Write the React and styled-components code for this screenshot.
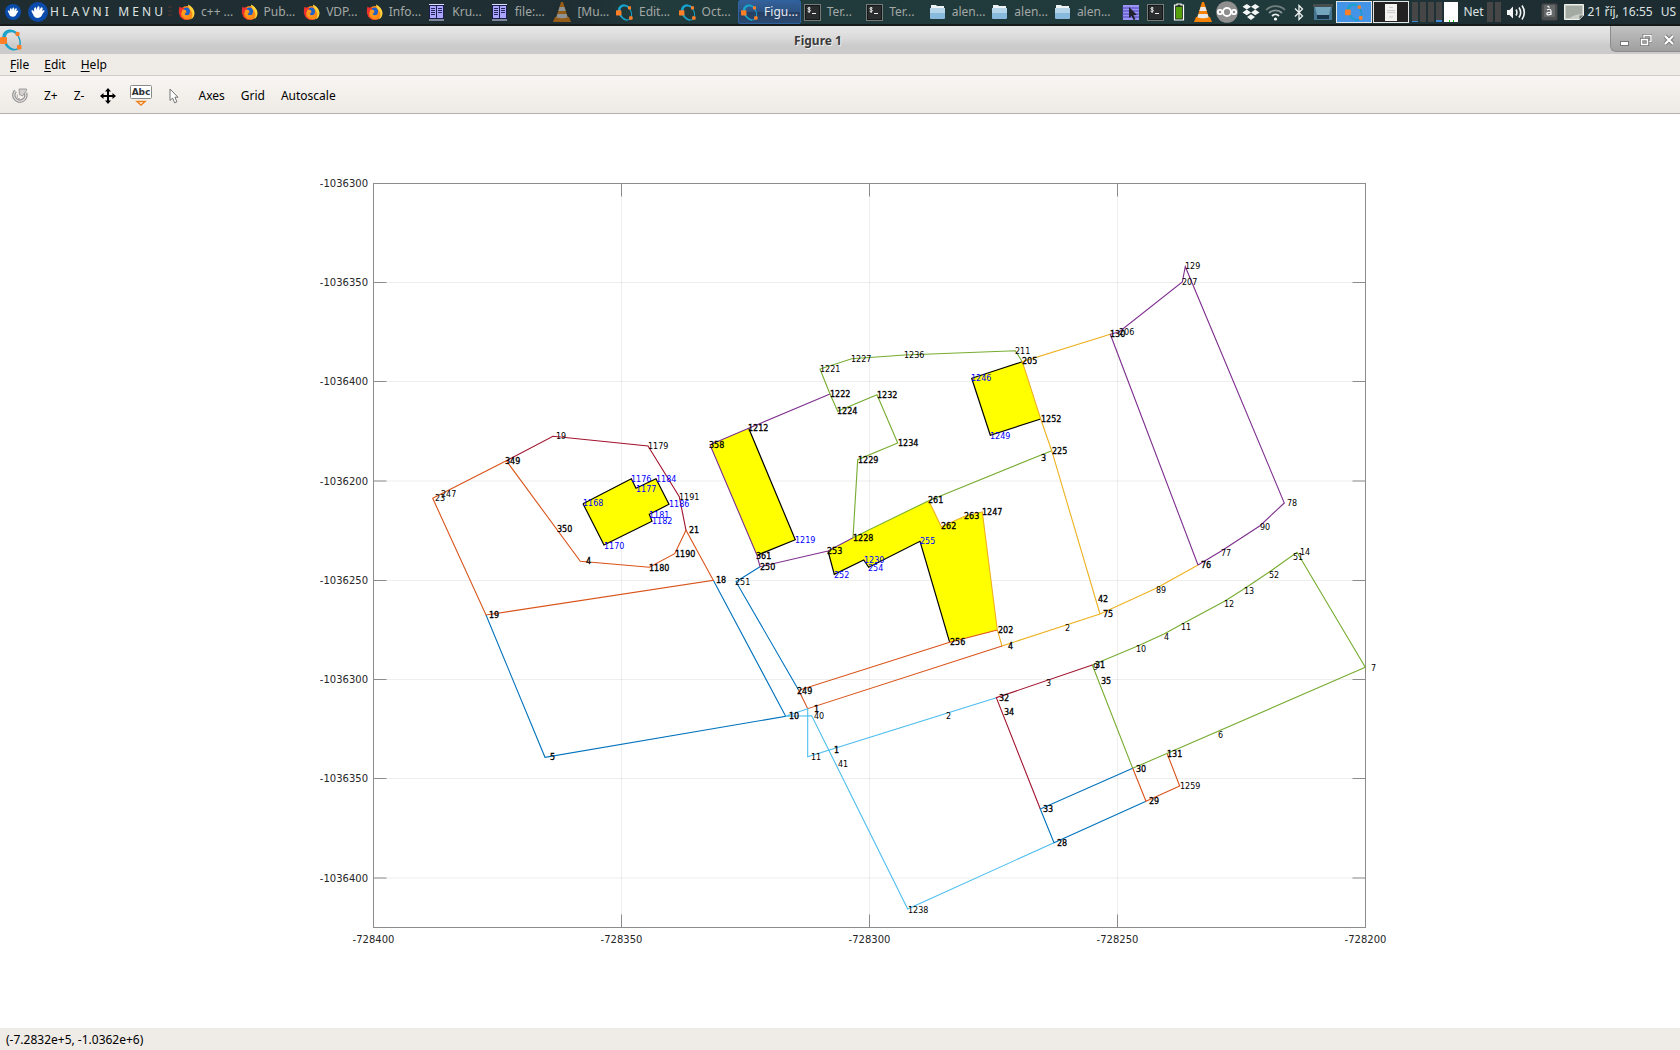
import React from "react";
import styled, { createGlobalStyle, css } from "styled-components";

const ui = '"Noto Sans", "Open Sans", sans-serif';

const GlobalStyle = createGlobalStyle`
  html, body { margin: 0; padding: 0; }
  *, *::before, *::after { box-sizing: border-box; }
  body { font-family: ${ui}; font-size: 12px; line-height: 16px; color: #000; }
  button { font: inherit; color: inherit; background: none; border: 0; margin: 0; padding: 0; }
  svg { display: block; flex: none; }
`;

const Desktop = styled.div`
  display: flex;
  flex-direction: column;
  min-height: 100vh;
  background: #fff;
`;

/* ---------- desktop panel ---------- */

const Panel = styled.nav`
  display: flex;
  align-items: center;
  height: 26px;
  padding-right: 4px;
  color: #dfe3e3;
  background: linear-gradient(100deg, #1f2d31 0%, #1f2f33 35%, #213a3c 38%, #203a3b 78%, #1e2f33 88%, #1c2b30 100%);
  border-bottom: 2px solid #161a1a;
`;

const Launcher = styled.button`
  display: flex;
  align-items: center;
  height: 24px;
  padding-left: ${(p) => (p.$first ? "5px" : "7px")};
  gap: 2px;
  white-space: pre;
`;

const Grip = styled.span`
  width: 4px;
  height: 12px;
  margin: 0 3px 0 5px;
  background: repeating-linear-gradient(#3a3030 0 2px, transparent 2px 4px);
`;

const Tasks = styled.div`
  display: flex;
  flex: 1;
  min-width: 0;
  height: 24px;
  margin-right: 6px;
`;

const Task = styled.button`
  display: flex;
  align-items: center;
  gap: 6px;
  flex: 1 1 0;
  min-width: 0;
  padding: 0 2px;
  white-space: nowrap;
  overflow: hidden;
  color: #a3a8a6;
  border: 1px solid transparent;
  border-radius: 2px;
  ${(p) =>
    p.$active &&
    css`
      color: #e8ecf2;
      background: linear-gradient(#33619a 0%, #2c5282 48%, #263f63 52%, #2b4a72 100%);
      border-color: #2f62a0;
    `}
`;

const Tray = styled.div`
  display: flex;
  align-items: center;
  height: 24px;
`;

const TrayButton = styled.button`
  display: flex;
  align-items: center;
  justify-content: center;
  width: 24px;
  height: 24px;
`;

const TrayGap = styled.span`
  width: 10px;
`;

const Pager = styled.div`
  display: flex;
  gap: 1px;
  padding: 0 3px 0 1px;
`;

const PagerCell = styled.button`
  display: flex;
  align-items: center;
  justify-content: center;
  width: 36px;
  height: 22px;
  border: 1px solid #e4e4e4;
  background: ${(p) => (p.$active ? "#4393e6" : "#222")};
`;

const Meters = styled.div`
  display: flex;
  gap: 2px;
  margin-right: ${(p) => (p.$tight ? "3px" : "5px")};
`;

const Meter = styled.span`
  width: ${(p) => (p.$graph ? "14px" : "6px")};
  height: 20px;
  background: ${(p) =>
    p.$graph
      ? "linear-gradient(90deg, transparent 5px, #1ed11e 5px 6px, transparent 6px 9px, #1ed11e 9px 10px, transparent 10px) bottom / 100% 2px no-repeat #fff"
      : "#464646"};
  border-bottom: ${(p) => (p.$load ? `${p.$load}px solid #3e86d8` : "0")};
`;

const Label = styled.span`
  margin-left: ${(p) => (p.$tight ? "0" : "2px")};
  margin-right: ${(p) => (p.$tight ? "3px" : "8px")};
  white-space: nowrap;
`;

/* ---------- window chrome ---------- */

const TitleBar = styled.header`
  display: flex;
  align-items: center;
  height: 28px;
  background: linear-gradient(#e8e8e8 0%, #d9d9d9 45%, #cbcbcb 70%, #cbcbcb 100%);
`;

const Title = styled.h1`
  flex: 1;
  margin: 0;
  padding: 2px 0 0 4px;
  font-size: 12px;
  line-height: 16px;
  font-weight: 700;
  text-align: center;
  color: #3b3b3b;
  text-shadow: 1px 1px 0 #f2f2f2;
`;

const WindowButtons = styled.div`
  display: flex;
  align-self: flex-start;
  align-items: center;
  justify-content: space-between;
  width: 70px;
  height: 26px;
  padding: 2px 4px 0 8px;
  background: linear-gradient(#c2c2c2, #9f9f9f);
  border-left: 1px solid #8c8c8c;
  border-bottom: 1px solid #8c8c8c;
  border-bottom-left-radius: 6px;
`;

const WindowButton = styled.button`
  display: flex;
  padding: 0 1px;
`;

const MenuBar = styled.nav`
  display: flex;
  align-items: center;
  gap: 15px;
  height: 22px;
  padding: 0 10px;
  background: #efebe7;
  border-bottom: 1px solid #d0ccc8;
`;

const MenuItem = styled.button`
  line-height: 20px;
  &::first-letter {
    text-decoration: underline;
    text-underline-offset: 2px;
  }
`;

const ToolBar = styled.div`
  display: flex;
  align-items: center;
  height: 38px;
  padding: 2px 4px 0;
  background: linear-gradient(#f8f5f2, #eeebe6);
  border-bottom: 1px solid #b5b1ac;
`;

const Tool = styled.button`
  display: flex;
  align-items: center;
  height: 32px;
  padding: 0 ${(p) => (p.$wide ? "6px" : "8px")};
`;

const Canvas = styled.main`
  display: flex;
  flex: 1;
  min-height: 0;
  background: #fff;
`;

const Plot = styled.svg`
  width: 100%;
  height: auto;
  flex: 1;
  font-family: "DejaVu Sans", sans-serif;
`;

const TickText = styled.text`
  font-size: 10px;
  fill: #262626;
  text-anchor: ${(p) => p.$anchor};
`;

const PointText = styled.text`
  font-size: 8px;
  fill: ${(p) => (p.$kind === 2 ? "#0000ff" : "#000")};
  stroke: ${(p) => (p.$kind === 1 ? "#000" : "none")};
  stroke-width: 0.3px;
`;

const StatusBar = styled.footer`
  display: flex;
  align-items: center;
  height: 22px;
  padding: 2px 6px 0;
  background: #efebe7;
`;

/* ---------- icons ---------- */

const Mouse = ({ s }) => (
  <svg width={s} height={s} viewBox="0 0 20 20" aria-hidden="true">
    <circle cx="10" cy="10" r="10" fill="#0a4bab" />
    <path d="M3.500 8.500c1-.9 2 0 2.700 1.200C5.800 7.500 6 5.500 7.200 5.300c1.100 0 1.200 1.600 1.500 3C9 6.500 9.300 4.300 10.500 4.300s1.100 2 .9 4c.8-1.600 1.700-3.400 2.800-2.900 1 .5.300 2.300-.2 3.800 1-.8 2-1.300 2.500-.6.500.8-1.300 2-2 3.500-.8 2-2 3.800-4.700 3.900-2.500 0-4-1.400-4.600-3.500-.5-1.500-2.200-3-1.700-4z" fill="#fff" />
  </svg>
);

const Firefox = () => (
  <svg width="17" height="17" viewBox="0 0 17 17" aria-hidden="true">
    <circle cx="9" cy="9" r="7" fill="#ff8a16" />
    <path d="M10 .5c3.500 1.500 6.500 5 6.500 8.500a7.500 7.500 0 0 1-4 6.600c2-2 2.500-5 1.300-7.600C13 6 10 4 10 .5z" fill="#ffd23c" />
    <path d="M1.500 2.500c.6.800 1.200 1 2 1.200L5.500 3l.8 2.500L3 9l.5 3.500 3.500 3 4.500-.2A7.600 7.600 0 0 1 1 9.500C.6 7 1 4.500 1.500 2.500z" fill="#f0302c" />
    <path d="M6 4.200c1.500-1.200 4-1 5.200.6 1.300 1.600 1.200 4.700-.5 6-1.500 1-4 .7-4.500-1.200 1 .2 2-.2 2.200-1L6.200 7.200z" fill="#1f62c9" />
    <path d="M4.500 5.500l3 .6 1.200 1.500-2.200.8.200 2c1 1.500 3 1.400 4.500.6-1 2-4.200 2.600-6 .8-1.600-1.500-1.700-4.500-.7-6.300z" fill="#ff9d1c" />
  </svg>
);

const Document = ({ pointer }) => (
  <svg width="18" height="17" viewBox="0 0 18 17" aria-hidden="true">
    {pointer ? (
      <>
        <rect x="1" y="1" width="16" height="15" fill="#9b93f5" />
        <path d="M0 4h17M0 7h17M0 10h17M0 13h17" stroke="#4a45b5" />
        <path d="M7 3l8 8-3.500.2 2 4-2 .8-1.800-4L7 14z" fill="#21242e" />
      </>
    ) : (
      <>
        <rect x="1" y="1" width="15" height="14" fill="#1d1d4a" />
        <path d="M1 .5h15M1 16h15" stroke="#dcdcff" />
        <path d="M2 2h6v12H2zM9 2h6v12H9z" fill="#aaa5ff" />
        <path d="M3 4.500h4M3 6.500h4M3 8.500h4M3 10.500h4M10 4.500h4M10 6.500h4M10 8.500h4" stroke="#25255c" />
      </>
    )}
  </svg>
);

const Cone = ({ dim }) => (
  <svg width="18" height="22" viewBox="0 0 18 22" opacity={dim ? 0.55 : 1} aria-hidden="true">
    <path d="M2 16h14l2 5H0z" fill="#f58200" />
    <path d="M8 1h2l5 16c-3 2-9 2-12 0z" fill="#f58200" />
    <path d="M6.600 6h4.800l1.300 4H5.400zM4.400 13h9.200l1 3.200c-3 1.500-8 1.500-11.200 0z" fill="#e8e8e8" />
  </svg>
);

const Octave = ({ w = 17 }) => (
  <svg width={w} height={w} viewBox="0 0 22 22" aria-hidden="true">
    <path d="M20 12c.8 5.500-2 9.500-6.500 8.500C8 19.400 3 13.500 3.500 7.500 4 2.500 8.500 0 13 2.500c3.800 2 6.400 5.800 7 9.500z" fill="none" stroke="#149ac4" strokeWidth="1.400" />
    <path d="M17 3.800C10 -1.500 2.500 2 3 9c.5 6 5.500 11.500 11 12C8.500 19 5.500 14 5.300 9 5.200 3.500 10 .8 17 3.800z" fill="#1aa3cc" stroke="#1aa3cc" strokeWidth="1.200" />
    <rect x="0" y="8" width="7" height="7" rx="1" fill="#ff7f27" />
    <rect x="15.500" y="3" width="4" height="4" rx="1" fill="#ff7f27" />
    <rect x="17" y="16" width="4.500" height="4.500" rx="1" fill="#ff7f27" />
  </svg>
);

const Terminal = () => (
  <svg width="17" height="17" viewBox="0 0 17 17" aria-hidden="true">
    <rect x=".5" y=".5" width="16" height="16" fill="#15181a" stroke="#777b78" />
    <rect x="2" y="2" width="13" height="13" fill="#292d2e" />
    <path d="M6.500 4.200c-1-.9-2.800-.5-2.600.6.200 1 2.500.6 2.500 1.900 0 1-1.800 1.300-2.800.4M5.100 3v6M8 9.500h4" fill="none" stroke="#f0f0f0" />
  </svg>
);

const Folder = () => (
  <svg width="17" height="16" viewBox="0 0 17 16" aria-hidden="true">
    <path d="M2 1h5l1 1h7v4H2z" fill="#eef3f6" />
    <rect x="1" y="4" width="15" height="11" rx="1" fill="#86b9dc" />
    <path d="M1 4h15v5H1z" fill="#b4d4ea" />
  </svg>
);

const Battery = () => (
  <svg width="12" height="18" viewBox="0 0 12 18" aria-hidden="true">
    <path d="M4 2V1h4v1h2.500v15h-9V2z" fill="#25351f" stroke="#fff" strokeWidth="1.200" />
    <rect x="3" y="4" width="6" height="11.500" fill="#56a00b" />
  </svg>
);

const Cloud = () => (
  <svg width="22" height="22" viewBox="0 0 22 22" aria-hidden="true">
    <circle cx="11" cy="11" r="10.800" fill="#8f8f8f" />
    <g fill="none" stroke="#fff" strokeWidth="1.800">
      <circle cx="4" cy="11" r="2.200" />
      <circle cx="11" cy="11" r="4" />
      <circle cx="18" cy="11" r="2.200" />
    </g>
  </svg>
);

const Dropbox = () => (
  <svg width="18" height="17" viewBox="0 0 18 17" fill="#f4f6f6" aria-hidden="true">
    <path d="M4.800 0L9 2.800 4.800 5.600.5 2.800zM13.200 0l4.300 2.800-4.300 2.800L9 2.800zM.5 8.400l4.300-2.800L9 8.400l-4.200 2.800zM13.200 5.600l4.300 2.800-4.300 2.800L9 8.400zM9 10.200l4 2.700L9 16l-4-3.100z" />
  </svg>
);

const Wifi = () => (
  <svg width="21" height="17" viewBox="0 0 21 17" fill="none" aria-hidden="true">
    <path d="M1 6C6 .8 15 .8 20 6" stroke="#71807f" strokeWidth="1.800" />
    <path d="M4 9c3.500-3.600 9.500-3.600 13 0" stroke="#8f9a9a" strokeWidth="1.800" />
    <path d="M7 12c2-2 5-2 7 0" stroke="#e8ebeb" strokeWidth="1.800" />
    <circle cx="10.500" cy="15" r="1.600" fill="#fff" />
  </svg>
);

const Bluetooth = () => (
  <svg width="10" height="17" viewBox="0 0 10 17" fill="none" stroke="#eef1f1" strokeWidth="1.300" aria-hidden="true">
    <path d="M1 4.500l7.500 7.500L5 15.500v-14L8.500 5 1 12.500" />
  </svg>
);

const Drive = () => (
  <svg width="20" height="18" viewBox="0 0 20 18" aria-hidden="true">
    <rect x="0" y="1" width="20" height="3" fill="#474e50" />
    <rect x="1" y="4" width="18" height="13" fill="#477692" />
    <path d="M2 4h16l-2 8H4z" fill="#73a6bd" />
    <path d="M4 12h12v4H4z" fill="#193649" />
  </svg>
);

const Page = () => (
  <svg width="12" height="17" viewBox="0 0 12 17" aria-hidden="true">
    <rect width="12" height="17" fill="#f2f2f0" />
    <path d="M4 3.500h4M2 6.500h8M2 8.500h8M4 13h4" stroke="#bdbdbd" strokeWidth=".7" />
  </svg>
);

const Speaker = () => (
  <svg width="20" height="17" viewBox="0 0 20 17" fill="none" stroke="#f3f5f5" strokeWidth="1.600" aria-hidden="true">
    <path d="M1 6h2.500L7 2.500v12L3.500 11H1z" fill="#f3f5f5" stroke="none" />
    <path d="M10 5.500c1.200 2 1.200 4 0 6M13 3.500c2 3 2 7 0 10M16 1.500c3 4.500 3 9.500 0 14" />
  </svg>
);

const Keyboard = () => (
  <svg width="17" height="18" viewBox="0 0 17 18" aria-hidden="true">
    <rect x=".5" y=".5" width="16" height="17" rx="2" fill="#4b4f50" stroke="#34383a" />
    <rect x="3" y="2" width="11" height="12" rx="1" fill="#65696a" />
    <path d="M6.500 3l2 1.500M6 7c1.500-1.200 4-1 4 .8V12M10 9.300c-3-.2-4.300.5-4.200 1.600.2 1.500 3.200 1.300 4.200-.2" fill="none" stroke="#fff" strokeWidth="1.200" />
  </svg>
);

const Note = () => (
  <svg width="20" height="16" viewBox="0 0 20 16" aria-hidden="true">
    <path d="M.5.5h19v11l-4 4H.5z" fill="#c9cdc7" stroke="#eef0ec" />
    <path d="M2 2h16v8c-6 .5-10 2-12 4H2z" fill="#a3aaa2" />
    <path d="M19.500 11.500l-4 4v-4z" fill="#747b74" />
  </svg>
);

const Refresh = () => (
  <svg width="16" height="16" viewBox="0 0 16 16" fill="none" aria-hidden="true">
    <path d="M3.500 3A6 6 0 1 0 13.500 5" stroke="#8c8c8c" strokeWidth="3.400" />
    <path d="M3.500 3A6 6 0 1 0 13.500 5" stroke="#dedcda" strokeWidth="1.400" />
    <path d="M7 1h7.500v1.500L10.500 8 7.500 6.500z" fill="#d3d1cf" stroke="#8c8c8c" strokeWidth=".8" />
    <path d="M5.500 6.500c-1 2 0 4.500 2.500 4.500" stroke="#a5a5a5" />
  </svg>
);

const Move = () => (
  <svg width="16" height="16" viewBox="0 0 16 16" aria-hidden="true">
    <path d="M8 0l3 3.500H9V7h3.500V5L16 8l-3.500 3V9H9v3.500h2L8 16l-3-3.500h2V9H3.500v2L0 8l3.500-3v2H7V3.500H5z" />
  </svg>
);

const AbcIcon = () => (
  <svg width="22" height="22" viewBox="0 0 22 22" aria-hidden="true">
    <rect x=".5" y=".5" width="21" height="13" rx="1" fill="#fff" stroke="#8a8a86" />
    <text x="11" y="10" textAnchor="middle" fontFamily="DejaVu Sans, sans-serif" fontWeight="700" fontSize="9" fill="#2e3436">Abc</text>
    <path d="M7 16.500h8l-4 3.500z" fill="#fff" stroke="#ef7f1a" strokeWidth="1.400" />
  </svg>
);

const Pointer = () => (
  <svg width="16" height="16" viewBox="0 0 16 16" aria-hidden="true">
    <path d="M4 1v11.500l2.600-2.400 2 4.700 2.300-1-2-4.600H12z" fill="#fff" stroke="#737373" />
  </svg>
);

const Minimize = () => (
  <svg width="9" height="12" viewBox="0 0 9 12" aria-hidden="true">
    <rect x=".5" y="7.500" width="8" height="4" fill="#fff" stroke="#777" />
  </svg>
);

const Restore = () => (
  <svg width="12" height="12" viewBox="0 0 12 12" fill="none" aria-hidden="true">
    <path d="M4 4V1.500h7v6H8.500" stroke="#777" strokeWidth="3" />
    <path d="M4 4V1.500h7v6H8.500" stroke="#fff" strokeWidth="1.400" />
    <rect x="1" y="5" width="7" height="6" fill="#999" stroke="#777" strokeWidth="2.400" />
    <rect x="1.500" y="5.500" width="6" height="5" stroke="#fff" strokeWidth="1.400" />
  </svg>
);

const Close = () => (
  <svg width="12" height="12" viewBox="0 0 12 12" fill="none" aria-hidden="true">
    <path d="M2 2l8 8M10 2l-8 8" stroke="#777" strokeWidth="4" />
    <path d="M2 2l8 8M10 2l-8 8" stroke="#fff" strokeWidth="2.200" />
  </svg>
);

/* ---------- data ---------- */

const tasks = [
  [<Firefox />, "c++ ..."],
  [<Firefox />, "Pub..."],
  [<Firefox />, "VDP..."],
  [<Firefox />, "Info..."],
  [<Document />, "Kru..."],
  [<Document />, "file:..."],
  [<Cone dim />, "[Mu..."],
  [<Octave />, "Edit..."],
  [<Octave />, "Oct..."],
  [<Octave />, "Figu...", true],
  [<Terminal />, "Ter..."],
  [<Terminal />, "Ter..."],
  [<Folder />, "alen..."],
  [<Folder />, "alen..."],
  [<Folder />, "alen..."],
];

const tray = [
  ["Clipboard", <Document pointer />],
  ["Terminal", <Terminal />],
  ["Battery", <Battery />],
  ["Player", <Cone />],
  ["Cloud", <Cloud />],
  ["Dropbox", <Dropbox />],
  ["Wireless", <Wifi />],
  ["Bluetooth", <Bluetooth />],
  ["Show desktop", <Drive />],
];

const X = { left: 373.5, right: 1365.5 };
const Y = { top: 183.5, bottom: 927.5 };
const xTicks = [
  [373.5, "-728400"],
  [621.5, "-728350"],
  [869.5, "-728300"],
  [1117.5, "-728250"],
  [1365.5, "-728200"],
];
const yTicks = [
  [183.5, "-1036300"],
  [282.5, "-1036350"],
  [381.5, "-1036400"],
  [481, "-1036200"],
  [580.5, "-1036250"],
  [679.5, "-1036300"],
  [778.5, "-1036350"],
  [878, "-1036400"],
];

const buildings = [
  "583,503.7 631.3,478.7 636,488.3 656,478.7 669,504.3 649.3,514.3 652,521.3 604,545",
  "710,444.7 748.7,428.3 795.3,539.7 757,555.3",
  "828,551 853,537.7 928.7,500.7 941.3,526.7 965.3,516 982.3,512 997.3,630 949.7,642.3 920,541.3 868.7,567.3 863.7,560 834.3,574.3",
  "1022.3,361.7 971.7,378.3 990.3,435.3 1040.7,419",
];

/* building walls that are not a parcel boundary */
const walls = [
  "583,503.7 631.3,478.7 636,488.3 656,478.7 669,504.3 649.3,514.3 652,521.3 604,545 583,503.7",
  "748.7,428.3 795.3,539.7 757,555.3",
  "828,551 834.3,574.3 863.7,560 868.7,567.3 920,541.3 949.7,642.3",
  "1022.3,361.7 971.7,378.3 990.3,435.3 1040.7,419",
];

const blue = "#0072bd";
const orange = "#d95319";
const yellow = "#edb120";
const purple = "#7e2f8e";
const green = "#77ac30";
const sky = "#4dbeee";
const maroon = "#a2142f";

const lines = [
  [blue, "486,615 545,757.3 785.7,716.3 713.3,580.3"],
  [blue, "760,566.7 736,581.7 798.7,690.3"],
  [orange, "506.3,460.7 432.7,498.3 486,615 713.3,580.3 686,530.3 674.7,553.7 649.3,567.3 580.3,561.3 506.3,460.7"],
  [maroon, "506.3,460.7 553,436.3 648,446 679.3,496.7 686,530.3"],
  [purple, "830,394 748.7,428.3 710,444.7 757,555.3 760,566.7 828,551 853,537.7"],
  [green, "830,394 820,369 851.7,358.7 904.7,355 1015.3,350.7 1022.3,361.7"],
  [green, "830,394 837.7,411.3 877,394.7 897.7,443 857.7,459.7 853,537.7 928.7,500.7 1051.7,450.7"],
  [yellow, "1110.3,334.3 1022.3,361.7 1040.7,419 1051.7,450.7 1100,614"],
  [yellow, "928.7,500.7 941.3,526.7 965.3,516 982.3,512 997.3,630 1002,646 1100,614 1156.7,588 1198,565"],
  [orange, "997.3,630 949.7,642.3 798.7,690.3 807.7,708.7 1002,646"],
  [purple, "1198,565 1110.3,334.3 1119.3,331.7 1182.3,282 1185.3,266.7 1284.3,503 1260,525.7 1221.7,550.7 1198,565"],
  [green, "1132.7,768.3 1092.3,665 1138.3,645.7 1164,634 1181.7,624.3 1225,601 1245,588.3 1269.3,572 1297,552.3 1365.3,667.3 1132.7,768.3"],
  [sky, "996.3,697.7 807.7,756.7 807.7,708.7 785.7,716.3 811.7,715.7 907.7,909 1054,842.7"],
  [maroon, "1092.3,665 996.3,697.7 1040.3,809"],
  [blue, "1132.7,768.3 1040.3,809 1054,842.7 1146,801.3"],
  [orange, "1132.7,768.3 1146,801.3 1179.7,786 1167.3,754"],
];

/* text, left, middle, kind: 0 plain, 1 shared point, 2 building corner */
const points = [
  ["19", 556, 436, 0], ["1179", 648, 446, 0], ["349", 505, 461, 1], ["247", 441, 494, 0],
  ["23", 435, 498, 0], ["350", 557, 529, 1], ["4", 586, 561, 1], ["1180", 649, 568, 1],
  ["1190", 675, 554, 1], ["21", 689, 530, 1], ["1191", 679, 497, 0], ["19", 489, 615, 1],
  ["18", 716, 580, 1], ["1168", 583, 503, 2], ["1176", 631, 479, 2], ["1177", 636, 489, 2],
  ["1184", 656, 479, 2], ["1186", 669, 504, 2], ["1181", 649, 515, 2], ["1182", 652, 521, 2],
  ["1170", 604, 546, 2], ["358", 709, 445, 1], ["1212", 748, 428, 1], ["361", 756, 556, 1],
  ["1219", 795, 540, 2], ["250", 760, 567, 1], ["251", 735, 582, 0], ["253", 827, 551, 1],
  ["1228", 853, 538, 1], ["261", 928, 500, 1], ["262", 941, 526, 1], ["263", 964, 516, 1],
  ["1247", 982, 512, 1], ["202", 998, 630, 1], ["256", 950, 642, 1], ["4", 1008, 646, 1],
  ["255", 920, 541, 2], ["254", 868, 568, 2], ["1230", 864, 560, 2], ["252", 834, 575, 2],
  ["1221", 820, 369, 0], ["1227", 851, 359, 0], ["1236", 904, 355, 0], ["211", 1015, 351, 0],
  ["205", 1022, 361, 1], ["1246", 971, 378, 2], ["1249", 990, 436, 2], ["1252", 1041, 419, 1],
  ["225", 1052, 451, 1], ["3", 1041, 458, 1], ["1222", 830, 394, 1], ["1224", 837, 411, 1],
  ["1232", 877, 395, 1], ["1234", 898, 443, 1], ["1229", 858, 460, 1], ["130", 1110, 334, 1],
  ["206", 1119, 332, 0], ["207", 1182, 282, 0], ["129", 1185, 266, 0], ["78", 1287, 503, 0],
  ["90", 1260, 527, 0], ["77", 1221, 553, 0], ["76", 1201, 565, 1], ["14", 1300, 552, 0],
  ["51", 1293, 557, 0], ["42", 1098, 599, 1], ["75", 1103, 614, 1], ["89", 1156, 590, 0],
  ["2", 1065, 628, 0], ["10", 1136, 649, 0], ["4", 1164, 637, 0], ["11", 1181, 627, 0],
  ["12", 1224, 604, 0], ["13", 1244, 591, 0], ["52", 1269, 575, 0], ["7", 1371, 668, 0],
  ["9", 1093, 667, 0], ["31", 1095, 665, 1], ["35", 1101, 681, 1], ["3", 1046, 683, 0],
  ["32", 999, 698, 1], ["34", 1004, 712, 1], ["2", 946, 716, 0], ["6", 1218, 735, 0],
  ["249", 797, 691, 1], ["1", 814, 709, 1], ["10", 789, 716, 1], ["40", 814, 716, 0],
  ["1", 834, 750, 1], ["11", 811, 757, 0], ["41", 838, 764, 0], ["1238", 908, 910, 0],
  ["28", 1057, 843, 1], ["33", 1043, 809, 1], ["30", 1136, 769, 1], ["131", 1167, 754, 1],
  ["1259", 1180, 786, 0], ["29", 1149, 801, 1], ["5", 550, 757, 1],
];

const Figure = () => (
  <Plot viewBox="0 114 1680 914" role="img" aria-label="Figure 1">
    <g stroke="#262626" strokeOpacity=".08">
      {xTicks.slice(1, -1).map(([x]) => <path key={x} d={`M${x} ${Y.top}V${Y.bottom}`} />)}
      {yTicks.slice(1).map(([y]) => <path key={y} d={`M${X.left} ${y}H${X.right}`} />)}
    </g>
    <g stroke="#8c8c8c" fill="none">
      <rect x={X.left} y={Y.top} width={X.right - X.left} height={Y.bottom - Y.top} />
      {xTicks.slice(1, -1).map(([x]) => (
        <path key={x} d={`M${x} ${Y.top}v13M${x} ${Y.bottom}v-13`} />
      ))}
      {yTicks.slice(1).map(([y]) => (
        <path key={y} d={`M${X.left} ${y}h13M${X.right} ${y}h-13`} />
      ))}
    </g>
    {buildings.map((b) => <polygon key={b} points={b} fill="#ff0" />)}
    {walls.map((w) => <polyline key={w} points={w} fill="none" stroke="#000" strokeWidth="1.200" />)}
    {lines.map(([c, p]) => <polyline key={p} points={p} fill="none" stroke={c} strokeWidth="1.100" />)}
    {xTicks.map(([x, t]) => <TickText key={x} x={x} y="943" $anchor="middle">{t}</TickText>)}
    {yTicks.map(([y, t]) => <TickText key={y} x="368" y={Math.floor(y) + 4} $anchor="end">{t}</TickText>)}
    {points.map(([t, x, y, kind], i) => (
      <PointText key={i} x={x} y={y + 3} $kind={kind}>{t}</PointText>
    ))}
  </Plot>
);

export default function App() {
  return (
    <Desktop>
      <GlobalStyle />
      <Panel aria-label="Desktop panel">
        <Launcher $first aria-label="Applications"><Mouse s={16} /></Launcher>
        <Launcher><Mouse s={20} />{"H L A V N I   M E N U"}</Launcher>
        <Grip />
        <Tasks>
          {tasks.map(([icon, text, active], i) => (
            <Task key={i} $active={active}>{icon}<span>{text}</span></Task>
          ))}
        </Tasks>
        <Tray>
          {tray.map(([name, icon]) => <TrayButton key={name} aria-label={name}>{icon}</TrayButton>)}
          <Pager>
            <PagerCell $active aria-label="Workspace 1"><Octave w={18} /></PagerCell>
            <PagerCell aria-label="Workspace 2"><Page /></PagerCell>
          </Pager>
          <Meters>
            <Meter $load={1} /><Meter /><Meter /><Meter $load={2} /><Meter $graph />
          </Meters>
          <Label $tight>Net</Label>
          <Meters $tight><Meter /><Meter /></Meters>
          <TrayButton aria-label="Volume"><Speaker /></TrayButton>
          <TrayGap />
          <TrayButton aria-label="Keyboard"><Keyboard /></TrayButton>
          <TrayButton aria-label="Notes"><Note /></TrayButton>
          <Label as="time">21 říj, 16:55</Label>
          <span>US</span>
        </Tray>
      </Panel>

      <TitleBar>
        <Octave w={22} />
        <Title>Figure 1</Title>
        <WindowButtons>
          <WindowButton aria-label="Minimize"><Minimize /></WindowButton>
          <WindowButton aria-label="Restore"><Restore /></WindowButton>
          <WindowButton aria-label="Close"><Close /></WindowButton>
        </WindowButtons>
      </TitleBar>

      <MenuBar aria-label="Menu">
        <MenuItem>File</MenuItem>
        <MenuItem>Edit</MenuItem>
        <MenuItem>Help</MenuItem>
      </MenuBar>

      <ToolBar role="toolbar" aria-label="Figure tools">
        <Tool aria-label="Rotate"><Refresh /></Tool>
        <Tool>Z+</Tool>
        <Tool>Z-</Tool>
        <Tool aria-label="Pan"><Move /></Tool>
        <Tool $wide aria-label="Insert text"><AbcIcon /></Tool>
        <Tool aria-label="Select"><Pointer /></Tool>
        <Tool>Axes</Tool>
        <Tool>Grid</Tool>
        <Tool>Autoscale</Tool>
      </ToolBar>

      <Canvas><Figure /></Canvas>
      <StatusBar>(-7.2832e+5, -1.0362e+6)</StatusBar>
    </Desktop>
  );
}
